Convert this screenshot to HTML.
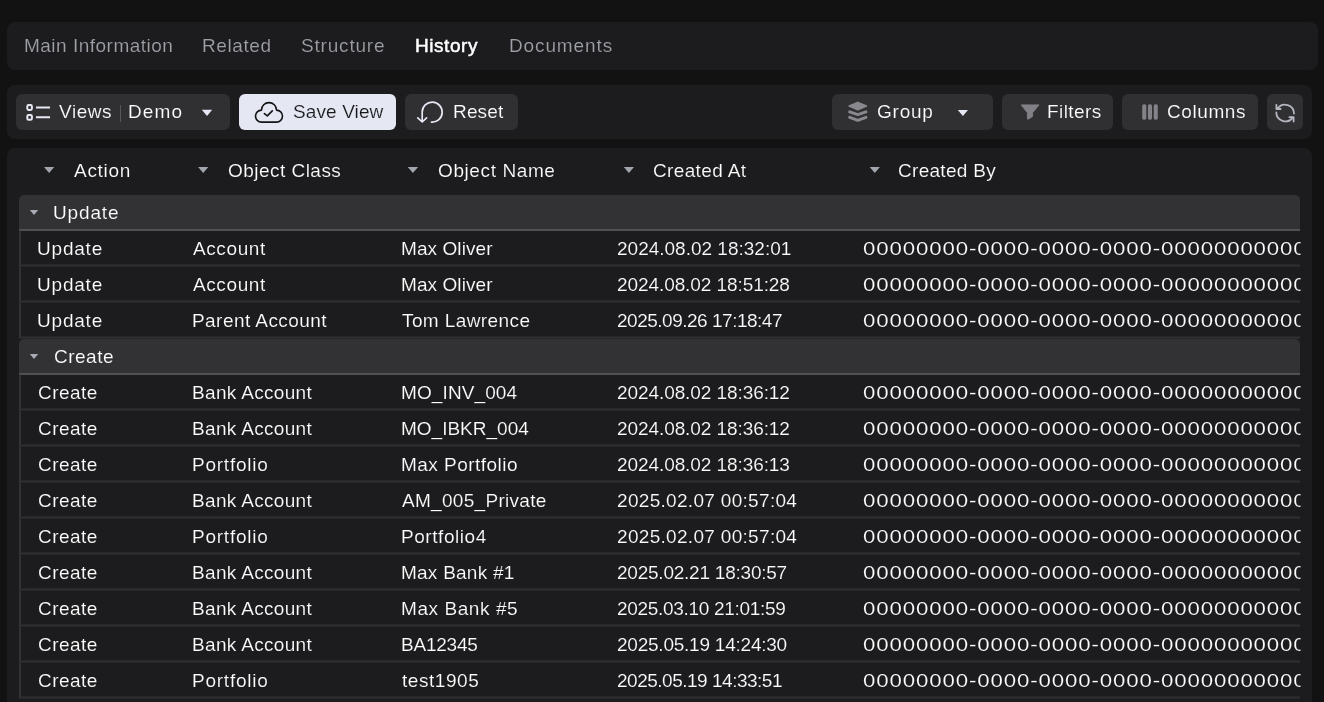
<!DOCTYPE html>
<html><head><meta charset="utf-8"><style>
html,body{margin:0;padding:0;}
body{width:1324px;height:702px;overflow:hidden;background:#121212;position:relative;font-family:"Liberation Sans",sans-serif;}
.p{position:absolute;background:#1c1c1e;border-radius:8px;}
.b{position:absolute;top:94px;height:36px;background:#303033;border-radius:6px;}
.t{position:absolute;will-change:transform;font-size:19px;line-height:20px;white-space:pre;}
.gh{position:absolute;left:19px;width:1281px;height:34px;background:#323235;border-bottom:2px solid #505055;border-radius:5px 5px 0 0;}
.rw{position:absolute;transform:translateY(-0.5px);left:19px;width:1279px;height:34px;border-left:2px solid #333336;border-bottom:2px solid #303033;}
svg.ic{position:absolute;left:0;top:0;width:1324px;height:702px;overflow:visible;}

</style></head><body>
<div class="p" style="left:7px;top:22px;width:1311px;height:48px"></div>
<div class="p" style="left:7px;top:85px;width:1305px;height:54px"></div>
<div class="p" style="left:7px;top:148px;width:1305px;height:600px"></div>
<div class="b" style="left:16px;width:214px;"></div>
<div class="b" style="left:239px;width:157px;background:#e5e7f3;"></div>
<div class="b" style="left:405px;width:113px;"></div>
<div class="b" style="left:832px;width:161px;"></div>
<div class="b" style="left:1002px;width:111px;"></div>
<div class="b" style="left:1122px;width:136px;"></div>
<div class="b" style="left:1267px;width:36px;"></div>
<div style="position:absolute;left:120px;top:105px;width:1px;height:17px;background:#55555a"></div>
<div class="gh" style="top:195px"></div>
<div class="rw" style="top:231px"></div>
<div class="rw" style="top:267px"></div>
<div class="rw" style="top:303px"></div>
<div class="gh" style="top:339px"></div>
<div class="rw" style="top:375px"></div>
<div class="rw" style="top:411px"></div>
<div class="rw" style="top:447px"></div>
<div class="rw" style="top:483px"></div>
<div class="rw" style="top:519px"></div>
<div class="rw" style="top:555px"></div>
<div class="rw" style="top:591px"></div>
<div class="rw" style="top:627px"></div>
<div class="rw" style="top:663px"></div>
<svg class="ic" viewBox="0 0 1324 702">
<!-- views icon -->
<g fill="none" stroke="#e6e8f4" stroke-width="2">
<rect x="27.3" y="105.1" width="4.6" height="4.8" rx="1.4"/>
<rect x="27.3" y="115" width="4.6" height="4.8" rx="1.4"/>
<path d="M36 107.5H50M36 117.2H50"/>
</g>
<!-- carets in buttons -->
<path d="M201.8 109.8H212.2L207 116Z" fill="#e6e8f5"/>
<path d="M957.8 110.1H968L962.9 116Z" fill="#e6e8f5"/>
<!-- cloud -->
<g fill="none" stroke="#141416" stroke-width="1.6" stroke-linecap="round" stroke-linejoin="round">
<path d="M261.5 122.1A6 6 0 0 1 261.5 110.1A7.5 7.5 0 0 1 276.5 110.1A6 6 0 0 1 276.5 122.1Z"/>
<path d="M264.4 113.6L267.3 115.9L272.3 110.9"/>
</g>
<!-- reset -->
<g fill="none" stroke="#e6e8f4" stroke-width="1.7" stroke-linecap="round" stroke-linejoin="round">
<path d="M431.5 122.1A10 10 0 1 0 422.2 112.1V121.8M417.8 117.8L422.2 122L426.6 117.8"/>
</g>
<!-- layers -->
<g fill="#88888e" stroke="#88888e" stroke-linejoin="round" stroke-linecap="round">
<path d="M849.2 106L857.8 102.4L866.4 106L857.8 109.7Z" stroke-width="1.6"/>
<path d="M849.7 111.9L857.8 114.6L865.9 111.9" fill="none" stroke-width="3"/>
<path d="M849.7 117.4L857.8 120.3L865.9 117.4" fill="none" stroke-width="3"/>
</g>
<!-- funnel -->
<path d="M1021.2 104.9H1039L1032.6 112.7V116.4L1028.1 119.3L1027.4 118.9V112.7Z" fill="#808086" stroke="#808086" stroke-width="0.9" stroke-linejoin="round"/>
<!-- columns -->
<g fill="#828288">
<rect x="1142.2" y="104.3" width="4.1" height="15.4" rx="1.6"/>
<rect x="1147.9" y="104.3" width="4.1" height="15.4" rx="1.6"/>
<rect x="1153.7" y="104.3" width="4.1" height="15.4" rx="1.6"/>
</g>
<!-- refresh -->
<g fill="none" stroke="#b4b6c0" stroke-width="1.8" stroke-linecap="round" stroke-linejoin="round">
<path d="M1294 113.6A9 9 0 0 0 1277.6 108.6M1276.4 104.8V109H1280.6"/>
<path d="M1276.3 112.3A9 9 0 0 0 1292.6 117.6M1293.6 121.6V117.2H1289.4"/>
</g>
<!-- header carets -->
<g fill="#a3a5ae">
<path d="M44 167H54.2L49.1 173Z"/>
<path d="M198.1 167H208.3L203.2 173Z"/>
<path d="M407.7 167H418.1L412.9 173Z"/>
<path d="M623.8 167H634L628.9 173Z"/>
<path d="M869.7 167H879.9L874.8 173Z"/>
</g>
<!-- group carets -->
<g fill="#a9abb5">
<path d="M29.8 209.9H38.2L34 215Z"/>
<path d="M29.8 353.9H38.2L34 359Z"/>
</g>
</svg>

<div class="t" style="left:23.5px;top:36px;color:#9ea0a8;letter-spacing:0.49px;-webkit-text-stroke:0.15px #1c1c1e">Main Information</div>
<div class="t" style="left:202.1px;top:36px;color:#9ea0a8;letter-spacing:0.6px;-webkit-text-stroke:0.15px #1c1c1e">Related</div>
<div class="t" style="left:301.2px;top:36px;color:#9ea0a8;letter-spacing:0.81px;-webkit-text-stroke:0.15px #1c1c1e">Structure</div>
<div class="t" style="left:415.3px;top:36px;color:#ffffff;letter-spacing:0.56px;-webkit-text-stroke:0.5px #ffffff">History</div>
<div class="t" style="left:508.9px;top:36px;color:#9ea0a8;letter-spacing:0.88px;-webkit-text-stroke:0.15px #1c1c1e">Documents</div>
<div class="t" style="left:58.5px;top:102px;color:#ffffff;letter-spacing:0.57px;-webkit-text-stroke:0.15px #303033">Views</div>
<div class="t" style="left:127.9px;top:102px;color:#ffffff;letter-spacing:1.09px;-webkit-text-stroke:0.15px #303033">Demo</div>
<div class="t" style="left:292.8px;top:102px;color:#18181a;letter-spacing:0.11px;-webkit-text-stroke:0.15px #e5e7f3">Save View</div>
<div class="t" style="left:453.1px;top:102px;color:#ffffff;letter-spacing:0.16px;-webkit-text-stroke:0.15px #303033">Reset</div>
<div class="t" style="left:876.7px;top:102px;color:#ffffff;letter-spacing:0.77px;-webkit-text-stroke:0.15px #303033">Group</div>
<div class="t" style="left:1046.9px;top:102px;color:#ffffff;letter-spacing:0.43px;-webkit-text-stroke:0.15px #303033">Filters</div>
<div class="t" style="left:1167.2px;top:102px;color:#ffffff;letter-spacing:0.59px;-webkit-text-stroke:0.15px #303033">Columns</div>
<div class="t" style="left:73.5px;top:161px;color:#ffffff;letter-spacing:0.71px;-webkit-text-stroke:0.15px #1c1c1e">Action</div>
<div class="t" style="left:228px;top:161px;color:#ffffff;letter-spacing:0.47px;-webkit-text-stroke:0.15px #1c1c1e">Object Class</div>
<div class="t" style="left:437.9px;top:161px;color:#ffffff;letter-spacing:0.6px;-webkit-text-stroke:0.15px #1c1c1e">Object Name</div>
<div class="t" style="left:652.6px;top:161px;color:#ffffff;letter-spacing:0.35px;-webkit-text-stroke:0.15px #1c1c1e">Created At</div>
<div class="t" style="left:898.4px;top:161px;color:#ffffff;letter-spacing:0.29px;-webkit-text-stroke:0.15px #1c1c1e">Created By</div>
<div class="t" style="left:53.2px;top:203px;color:#ffffff;letter-spacing:0.86px;-webkit-text-stroke:0.15px #323235">Update</div>
<div class="t" style="left:54px;top:347px;color:#ffffff;letter-spacing:0.49px;-webkit-text-stroke:0.15px #323235">Create</div>
<div class="t" style="left:37.3px;top:239px;color:#ffffff;letter-spacing:0.8px;-webkit-text-stroke:0.15px #1c1c1e">Update</div>
<div class="t" style="left:192.6px;top:239px;color:#ffffff;letter-spacing:0.6px;-webkit-text-stroke:0.15px #1c1c1e">Account</div>
<div class="t" style="left:401.4px;top:239px;color:#ffffff;letter-spacing:0.08px;-webkit-text-stroke:0.15px #1c1c1e">Max Oliver</div>
<div class="t" style="left:616.6px;top:239px;color:#ffffff;-webkit-text-stroke:0.15px #1c1c1e">2024.08.02 18:32:01</div>
<div class="t" style="left:862.9px;top:239px;color:#ffffff;letter-spacing:0.75px;-webkit-text-stroke:0.15px #1c1c1e;width:373.59px;overflow:hidden;transform:scaleX(1.17);transform-origin:0 0">00000000-0000-0000-0000-000000000000</div>
<div class="t" style="left:37.3px;top:275px;color:#ffffff;letter-spacing:0.8px;-webkit-text-stroke:0.15px #1c1c1e">Update</div>
<div class="t" style="left:192.6px;top:275px;color:#ffffff;letter-spacing:0.6px;-webkit-text-stroke:0.15px #1c1c1e">Account</div>
<div class="t" style="left:401.4px;top:275px;color:#ffffff;letter-spacing:0.08px;-webkit-text-stroke:0.15px #1c1c1e">Max Oliver</div>
<div class="t" style="left:616.6px;top:275px;color:#ffffff;letter-spacing:-0.08px;-webkit-text-stroke:0.15px #1c1c1e">2024.08.02 18:51:28</div>
<div class="t" style="left:862.9px;top:275px;color:#ffffff;letter-spacing:0.75px;-webkit-text-stroke:0.15px #1c1c1e;width:373.59px;overflow:hidden;transform:scaleX(1.17);transform-origin:0 0">00000000-0000-0000-0000-000000000000</div>
<div class="t" style="left:37.3px;top:311px;color:#ffffff;letter-spacing:0.8px;-webkit-text-stroke:0.15px #1c1c1e">Update</div>
<div class="t" style="left:191.6px;top:311px;color:#ffffff;letter-spacing:0.44px;-webkit-text-stroke:0.15px #1c1c1e">Parent Account</div>
<div class="t" style="left:402.4px;top:311px;color:#ffffff;letter-spacing:0.4px;-webkit-text-stroke:0.15px #1c1c1e">Tom Lawrence</div>
<div class="t" style="left:616.6px;top:311px;color:#ffffff;letter-spacing:-0.49px;-webkit-text-stroke:0.15px #1c1c1e">2025.09.26 17:18:47</div>
<div class="t" style="left:862.9px;top:311px;color:#ffffff;letter-spacing:0.75px;-webkit-text-stroke:0.15px #1c1c1e;width:373.59px;overflow:hidden;transform:scaleX(1.17);transform-origin:0 0">00000000-0000-0000-0000-000000000000</div>
<div class="t" style="left:38.3px;top:383px;color:#ffffff;letter-spacing:0.47px;-webkit-text-stroke:0.15px #1c1c1e">Create</div>
<div class="t" style="left:191.6px;top:383px;color:#ffffff;letter-spacing:0.32px;-webkit-text-stroke:0.15px #1c1c1e">Bank Account</div>
<div class="t" style="left:401.4px;top:383px;color:#ffffff;letter-spacing:0.11px;-webkit-text-stroke:0.15px #1c1c1e">MO_INV_004</div>
<div class="t" style="left:616.6px;top:383px;color:#ffffff;letter-spacing:-0.08px;-webkit-text-stroke:0.15px #1c1c1e">2024.08.02 18:36:12</div>
<div class="t" style="left:862.9px;top:383px;color:#ffffff;letter-spacing:0.75px;-webkit-text-stroke:0.15px #1c1c1e;width:373.59px;overflow:hidden;transform:scaleX(1.17);transform-origin:0 0">00000000-0000-0000-0000-000000000000</div>
<div class="t" style="left:38.3px;top:419px;color:#ffffff;letter-spacing:0.47px;-webkit-text-stroke:0.15px #1c1c1e">Create</div>
<div class="t" style="left:191.6px;top:419px;color:#ffffff;letter-spacing:0.32px;-webkit-text-stroke:0.15px #1c1c1e">Bank Account</div>
<div class="t" style="left:401.4px;top:419px;color:#ffffff;-webkit-text-stroke:0.15px #1c1c1e">MO_IBKR_004</div>
<div class="t" style="left:616.6px;top:419px;color:#ffffff;letter-spacing:-0.08px;-webkit-text-stroke:0.15px #1c1c1e">2024.08.02 18:36:12</div>
<div class="t" style="left:862.9px;top:419px;color:#ffffff;letter-spacing:0.75px;-webkit-text-stroke:0.15px #1c1c1e;width:373.59px;overflow:hidden;transform:scaleX(1.17);transform-origin:0 0">00000000-0000-0000-0000-000000000000</div>
<div class="t" style="left:38.3px;top:455px;color:#ffffff;letter-spacing:0.47px;-webkit-text-stroke:0.15px #1c1c1e">Create</div>
<div class="t" style="left:191.6px;top:455px;color:#ffffff;letter-spacing:0.76px;-webkit-text-stroke:0.15px #1c1c1e">Portfolio</div>
<div class="t" style="left:401.4px;top:455px;color:#ffffff;letter-spacing:0.47px;-webkit-text-stroke:0.15px #1c1c1e">Max Portfolio</div>
<div class="t" style="left:616.6px;top:455px;color:#ffffff;letter-spacing:-0.08px;-webkit-text-stroke:0.15px #1c1c1e">2024.08.02 18:36:13</div>
<div class="t" style="left:862.9px;top:455px;color:#ffffff;letter-spacing:0.75px;-webkit-text-stroke:0.15px #1c1c1e;width:373.59px;overflow:hidden;transform:scaleX(1.17);transform-origin:0 0">00000000-0000-0000-0000-000000000000</div>
<div class="t" style="left:38.3px;top:491px;color:#ffffff;letter-spacing:0.47px;-webkit-text-stroke:0.15px #1c1c1e">Create</div>
<div class="t" style="left:191.6px;top:491px;color:#ffffff;letter-spacing:0.32px;-webkit-text-stroke:0.15px #1c1c1e">Bank Account</div>
<div class="t" style="left:402.4px;top:491px;color:#ffffff;letter-spacing:0.3px;-webkit-text-stroke:0.15px #1c1c1e">AM_005_Private</div>
<div class="t" style="left:616.6px;top:491px;color:#ffffff;letter-spacing:0.31px;-webkit-text-stroke:0.15px #1c1c1e">2025.02.07 00:57:04</div>
<div class="t" style="left:862.9px;top:491px;color:#ffffff;letter-spacing:0.75px;-webkit-text-stroke:0.15px #1c1c1e;width:373.59px;overflow:hidden;transform:scaleX(1.17);transform-origin:0 0">00000000-0000-0000-0000-000000000000</div>
<div class="t" style="left:38.3px;top:527px;color:#ffffff;letter-spacing:0.47px;-webkit-text-stroke:0.15px #1c1c1e">Create</div>
<div class="t" style="left:191.6px;top:527px;color:#ffffff;letter-spacing:0.76px;-webkit-text-stroke:0.15px #1c1c1e">Portfolio</div>
<div class="t" style="left:401.4px;top:527px;color:#ffffff;letter-spacing:0.56px;-webkit-text-stroke:0.15px #1c1c1e">Portfolio4</div>
<div class="t" style="left:616.6px;top:527px;color:#ffffff;letter-spacing:0.31px;-webkit-text-stroke:0.15px #1c1c1e">2025.02.07 00:57:04</div>
<div class="t" style="left:862.9px;top:527px;color:#ffffff;letter-spacing:0.75px;-webkit-text-stroke:0.15px #1c1c1e;width:373.59px;overflow:hidden;transform:scaleX(1.17);transform-origin:0 0">00000000-0000-0000-0000-000000000000</div>
<div class="t" style="left:38.3px;top:563px;color:#ffffff;letter-spacing:0.47px;-webkit-text-stroke:0.15px #1c1c1e">Create</div>
<div class="t" style="left:191.6px;top:563px;color:#ffffff;letter-spacing:0.32px;-webkit-text-stroke:0.15px #1c1c1e">Bank Account</div>
<div class="t" style="left:401.4px;top:563px;color:#ffffff;letter-spacing:0.24px;-webkit-text-stroke:0.15px #1c1c1e">Max Bank #1</div>
<div class="t" style="left:616.6px;top:563px;color:#ffffff;letter-spacing:-0.23px;-webkit-text-stroke:0.15px #1c1c1e">2025.02.21 18:30:57</div>
<div class="t" style="left:862.9px;top:563px;color:#ffffff;letter-spacing:0.75px;-webkit-text-stroke:0.15px #1c1c1e;width:373.59px;overflow:hidden;transform:scaleX(1.17);transform-origin:0 0">00000000-0000-0000-0000-000000000000</div>
<div class="t" style="left:38.3px;top:599px;color:#ffffff;letter-spacing:0.47px;-webkit-text-stroke:0.15px #1c1c1e">Create</div>
<div class="t" style="left:191.6px;top:599px;color:#ffffff;letter-spacing:0.32px;-webkit-text-stroke:0.15px #1c1c1e">Bank Account</div>
<div class="t" style="left:401.4px;top:599px;color:#ffffff;letter-spacing:0.57px;-webkit-text-stroke:0.15px #1c1c1e">Max Bank #5</div>
<div class="t" style="left:616.6px;top:599px;color:#ffffff;letter-spacing:-0.3px;-webkit-text-stroke:0.15px #1c1c1e">2025.03.10 21:01:59</div>
<div class="t" style="left:862.9px;top:599px;color:#ffffff;letter-spacing:0.75px;-webkit-text-stroke:0.15px #1c1c1e;width:373.59px;overflow:hidden;transform:scaleX(1.17);transform-origin:0 0">00000000-0000-0000-0000-000000000000</div>
<div class="t" style="left:38.3px;top:635px;color:#ffffff;letter-spacing:0.47px;-webkit-text-stroke:0.15px #1c1c1e">Create</div>
<div class="t" style="left:191.6px;top:635px;color:#ffffff;letter-spacing:0.32px;-webkit-text-stroke:0.15px #1c1c1e">Bank Account</div>
<div class="t" style="left:401.4px;top:635px;color:#ffffff;letter-spacing:-0.22px;-webkit-text-stroke:0.15px #1c1c1e">BA12345</div>
<div class="t" style="left:616.6px;top:635px;color:#ffffff;letter-spacing:-0.23px;-webkit-text-stroke:0.15px #1c1c1e">2025.05.19 14:24:30</div>
<div class="t" style="left:862.9px;top:635px;color:#ffffff;letter-spacing:0.75px;-webkit-text-stroke:0.15px #1c1c1e;width:373.59px;overflow:hidden;transform:scaleX(1.17);transform-origin:0 0">00000000-0000-0000-0000-000000000000</div>
<div class="t" style="left:38.3px;top:671px;color:#ffffff;letter-spacing:0.47px;-webkit-text-stroke:0.15px #1c1c1e">Create</div>
<div class="t" style="left:191.6px;top:671px;color:#ffffff;letter-spacing:0.76px;-webkit-text-stroke:0.15px #1c1c1e">Portfolio</div>
<div class="t" style="left:402.4px;top:671px;color:#ffffff;letter-spacing:0.55px;-webkit-text-stroke:0.15px #1c1c1e">test1905</div>
<div class="t" style="left:616.6px;top:671px;color:#ffffff;letter-spacing:-0.49px;-webkit-text-stroke:0.15px #1c1c1e">2025.05.19 14:33:51</div>
<div class="t" style="left:862.9px;top:671px;color:#ffffff;letter-spacing:0.75px;-webkit-text-stroke:0.15px #1c1c1e;width:373.59px;overflow:hidden;transform:scaleX(1.17);transform-origin:0 0">00000000-0000-0000-0000-000000000000</div>
</body></html>
